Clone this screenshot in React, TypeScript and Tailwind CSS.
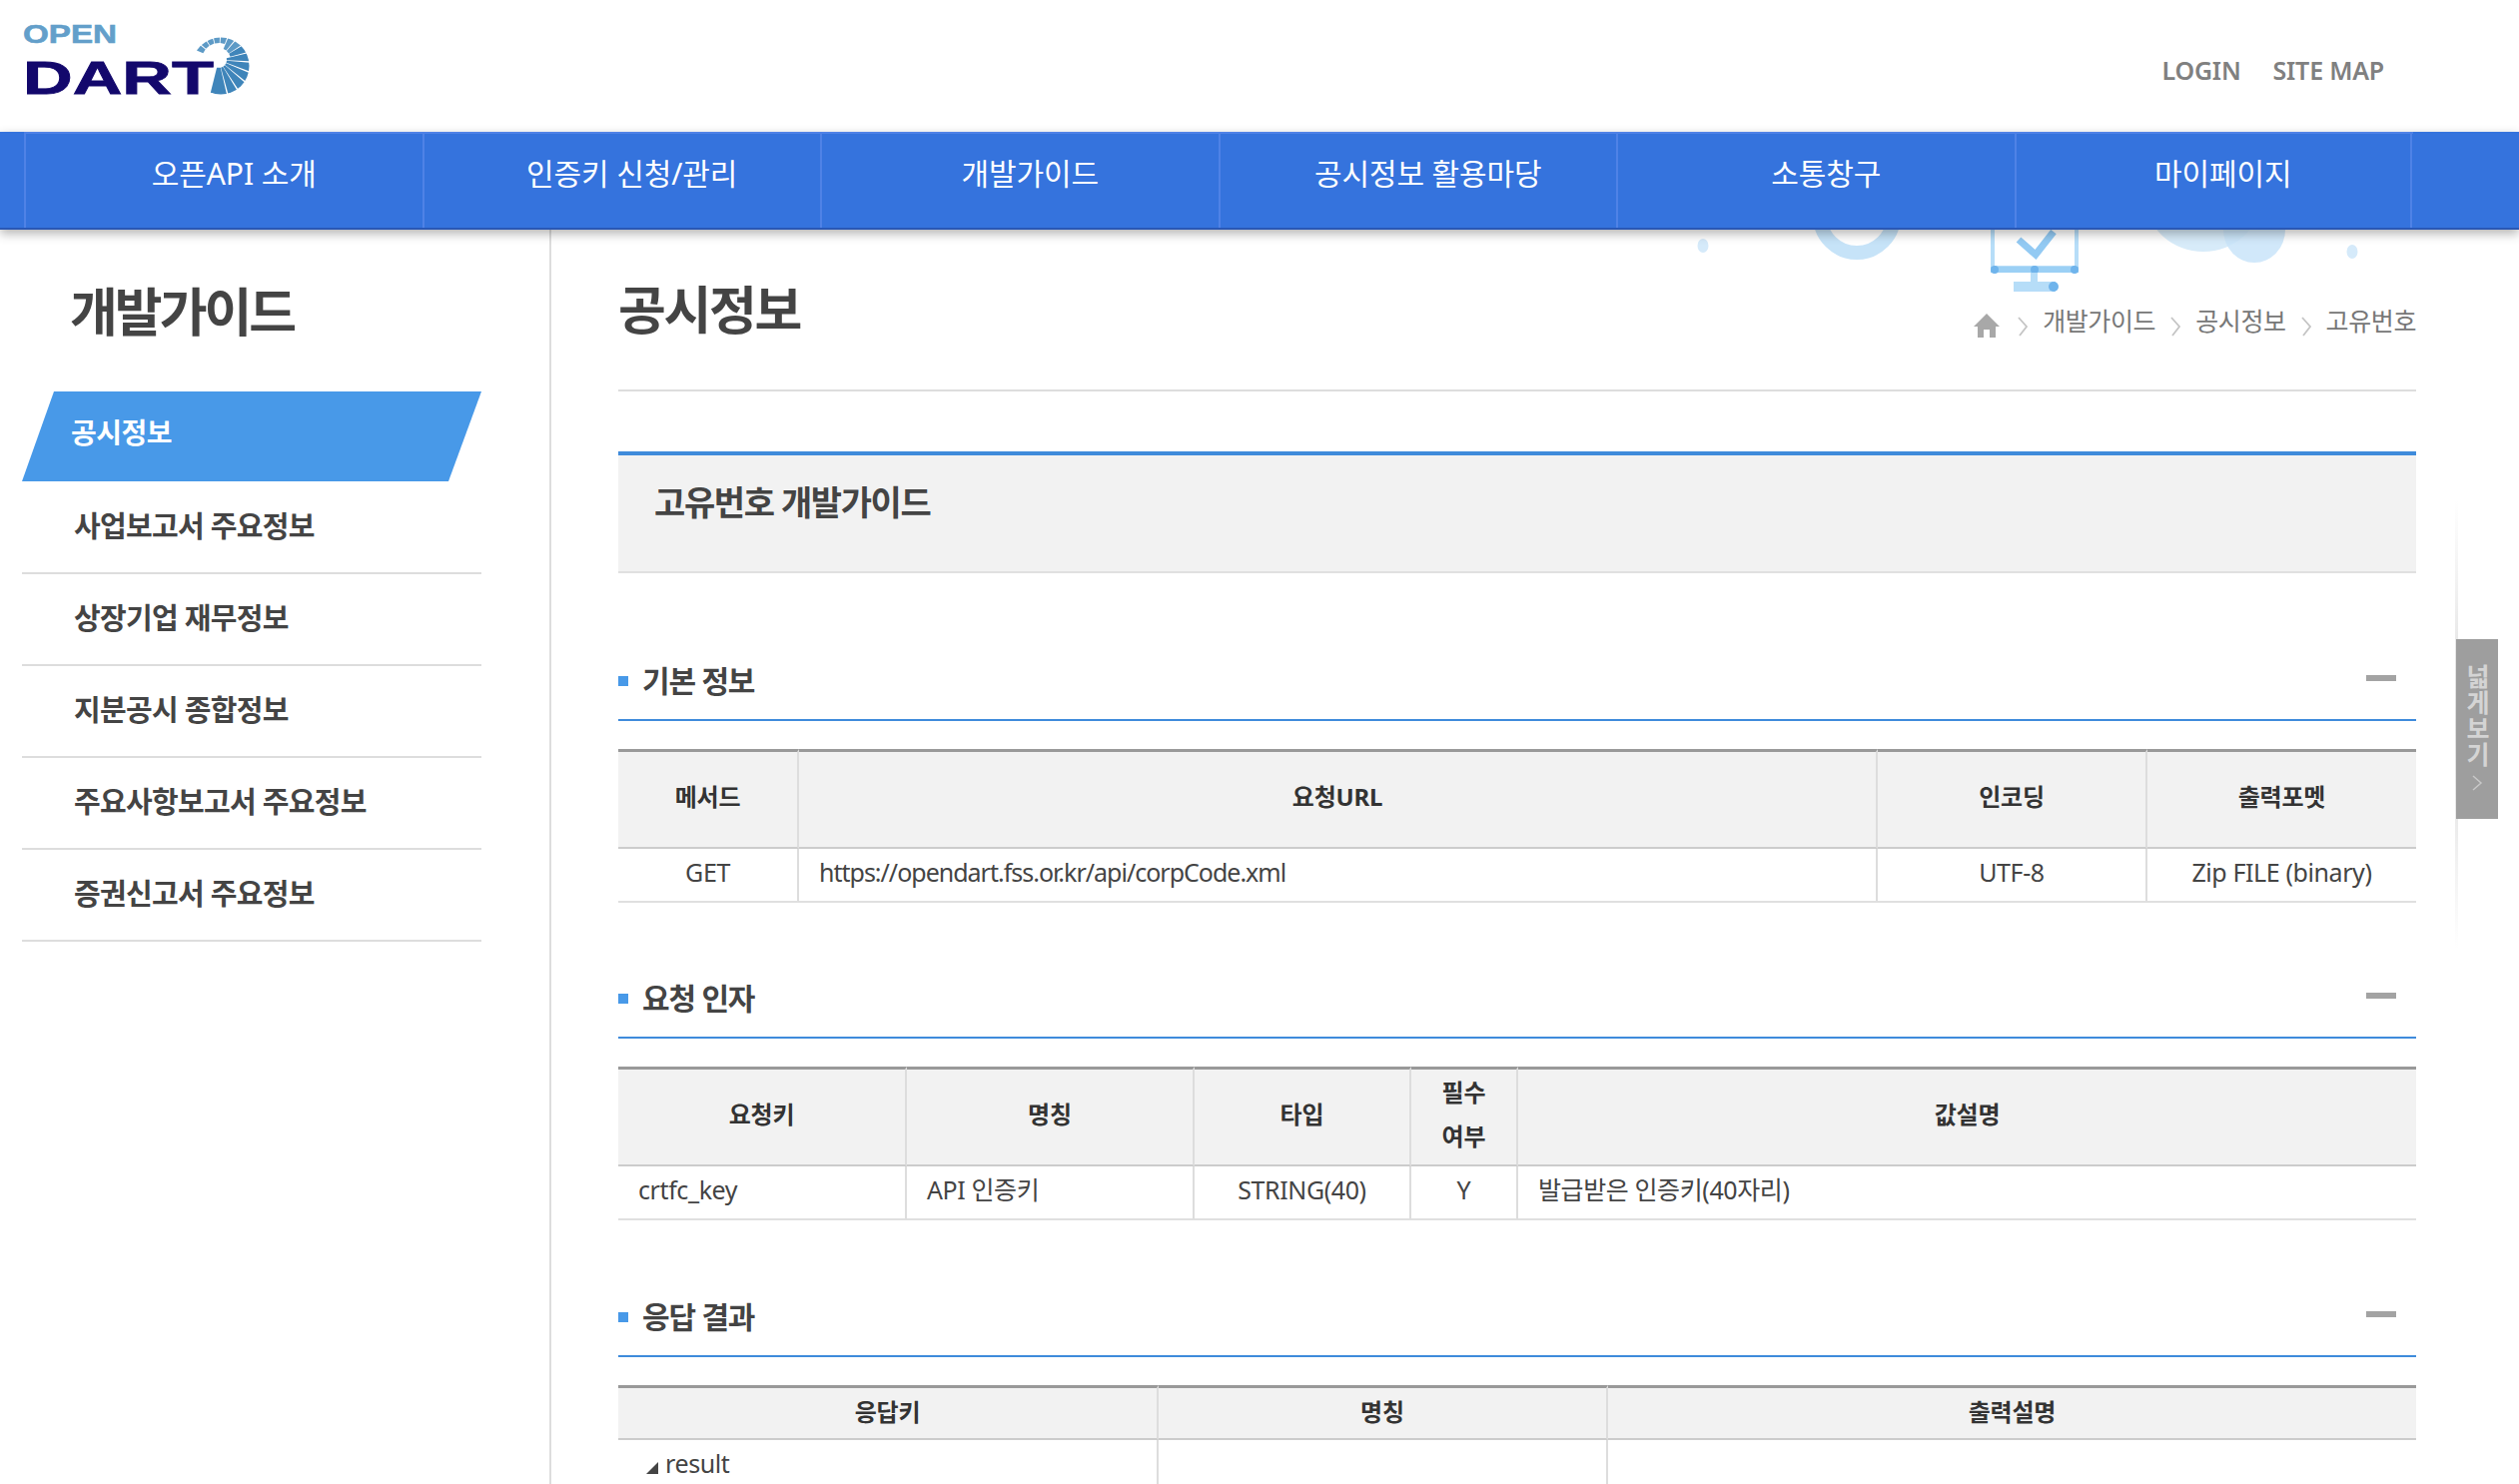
import { ReactNode } from "react";

const NAV_ITEMS = [
  "오픈API 소개",
  "인증키 신청/관리",
  "개발가이드",
  "공시정보 활용마당",
  "소통창구",
  "마이페이지",
];

const SIDE_ITEMS = [
  "사업보고서 주요정보",
  "상장기업 재무정보",
  "지분공시 종합정보",
  "주요사항보고서 주요정보",
  "증권신고서 주요정보",
];

function Logo() {
  const cx = 219;
  const cy = 60;
  // sun rays, degrees clockwise from the x axis
  const rays = [-158, -140, -122, -104, -86, -68, -50, -32, -14, 4, 22, 40, 58, 76];
  const point = (deg: number, r: number) => {
    const a = (deg * Math.PI) / 180;
    return `${cx + r * Math.cos(a)},${cy + r * Math.sin(a)}`;
  };
  return (
    <svg width="270" height="110" viewBox="0 0 270 110" className="block">
      <defs>
        <clipPath id="sun">
          <circle cx="221" cy="66" r="28.5" />
        </clipPath>
      </defs>
      <g clipPath="url(#sun)">
        {rays.map((deg, i) => {
          const next = i === rays.length - 1 ? 104 : deg + 16.5;
          const inner = i < 5 ? 17 : i < 8 ? 12 : 8;
          return (
            <polygon
              key={deg}
              points={`${point(deg + 1, inner)} ${point(deg + 1, 50)} ${point(next, 50)} ${point(next, inner)}`}
              fill={i > 6 ? "#3f85ba" : "#5d9ac6"}
            />
          );
        })}
      </g>
      <text
        x="23"
        y="43"
        fontFamily="'Liberation Sans', sans-serif"
        fontWeight="700"
        fontSize="26.5"
        fill="#639fca"
        stroke="#639fca"
        strokeWidth="0.6"
        textLength="94"
        lengthAdjust="spacingAndGlyphs"
      >
        OPEN
      </text>
      <text
        x="23"
        y="94"
        fontFamily="'Liberation Sans', sans-serif"
        fontWeight="700"
        fontSize="47"
        fill="#13086c"
        stroke="#13086c"
        strokeWidth="0.8"
        textLength="191"
        lengthAdjust="spacingAndGlyphs"
      >
        DART
      </text>
    </svg>
  );
}

function Decor() {
  return (
    <svg
      width="680"
      height="70"
      viewBox="0 0 680 70"
      className="absolute left-[1690px] top-[230px]"
    >
      <ellipse cx="15" cy="16" rx="5.5" ry="7" fill="#d5eafa" />
      <circle cx="169" cy="-14" r="37" fill="none" stroke="#c6e3f8" strokeWidth="14" />
      <rect x="305" y="-4" width="84" height="42" fill="none" stroke="#b6ddf8" strokeWidth="4" />
      <polyline points="331,10 348,25 366,2" fill="none" stroke="#93caf3" strokeWidth="7" />
      <rect x="303" y="37" width="88" height="6" fill="#9bd0f5" />
      <circle cx="307" cy="40" r="4" fill="#6fb4ec" />
      <circle cx="347" cy="40" r="4" fill="#6fb4ec" />
      <circle cx="387" cy="40" r="4" fill="#6fb4ec" />
      <rect x="343" y="43" width="7" height="9" fill="#b6ddf8" />
      <rect x="326" y="52" width="42" height="10" fill="#b6ddf8" />
      <circle cx="366" cy="57" r="5" fill="#6fb4ec" />
      <ellipse cx="516" cy="-30" rx="57" ry="52" fill="#d7ebf9" />
      <ellipse cx="567" cy="0" rx="31" ry="33" fill="#c9e4f9" fillOpacity="0.85" />
      <ellipse cx="665" cy="22" rx="5.5" ry="7" fill="#d5eafa" />
    </svg>
  );
}

function SectionHeading({ title }: { title: string }) {
  return (
    <div className="flex items-center justify-between h-[80px] border-b-2 border-[#3f8bdb] pr-[20px]">
      <div className="flex items-center">
        <span className="w-[10px] h-[10px] bg-[#4899e8] mr-[14px] mt-[2px]" />
        <h3 className="text-[30px] font-bold tracking-[-1.2px] text-[#444]">{title}</h3>
      </div>
      <span className="w-[30px] h-[6px] bg-[#a3a3a3] mb-[4px]" />
    </div>
  );
}

type Cell = { text: ReactNode; align?: "left" };

function DataTable({
  cols,
  head,
  rows,
  headHeight,
  headPad,
}: {
  cols: string[];
  head: ReactNode[];
  rows: Cell[][];
  headHeight: string;
  headPad: string;
}) {
  return (
    <table className="w-full table-fixed border-separate border-spacing-0 mt-[28px]">
      <colgroup>
        {cols.map((c, i) => (
          <col key={i} className={c} />
        ))}
      </colgroup>
      <thead>
        <tr className={headHeight}>
          {head.map((h, i) => (
            <th
              key={i}
              className={`bg-[#f2f2f2] border-t-[3px] border-t-[#999] border-b-2 border-b-[#ccc] border-r-2 border-r-[#ddd] last:border-r-0 text-[24px] leading-[44px] font-bold tracking-[-0.2px] text-[#333] text-center ${headPad}`}
            >
              {h}
            </th>
          ))}
        </tr>
      </thead>
      <tbody>
        {rows.map((row, r) => (
          <tr key={r} className="h-[54px]">
            {row.map((cell, i) => (
              <td
                key={i}
                className={`border-b-2 border-b-[#e0e0e0] border-r-2 border-r-[#ddd] last:border-r-0 px-[20px] pb-[5px] text-[25px] text-[#444] tracking-[-0.4px] ${
                  cell.align === "left" ? "text-left" : "text-center"
                }`}
              >
                {cell.text}
              </td>
            ))}
          </tr>
        ))}
      </tbody>
    </table>
  );
}

function Crumb() {
  return (
    <svg width="12" height="20" viewBox="0 0 12 20" className="mt-[11px]">
      <polyline points="2,1 10,10 3,19" fill="none" stroke="#c4c4c4" strokeWidth="1.8" />
    </svg>
  );
}

export default function App() {
  return (
    <div
      className="relative w-[2522px] h-[1486px] overflow-hidden bg-white"
      style={{ fontFamily: '"Noto Sans", "Noto Sans CJK KR", sans-serif' }}
    >
      {/* Top bar */}
      <header className="flex items-start justify-between h-[132px] pr-[135px]">
        <Logo />
        <div className="flex gap-[32px] pt-[52px] text-[25px] font-semibold text-[#808080] tracking-[-0.2px]">
          <a>LOGIN</a>
          <a>SITE MAP</a>
        </div>
      </header>

      <nav className="relative z-10 h-[98px] bg-[#3573dd] border-b-2 border-[#2a58b5] pl-[24px] shadow-[0_4px_10px_rgba(0,0,0,0.3)]">
        <ul className="flex w-[2392px] h-full border-t-2 border-[#4f82e6]">
          {NAV_ITEMS.map((item) => (
            <li
              key={item}
              className="flex items-center justify-center w-[398.5px] pl-[20px] pb-[16px] border-l-2 border-[#4f82e6] last:border-r-2 text-[30px] text-white tracking-[-0.1px]"
            >
              {item}
            </li>
          ))}
        </ul>
      </nav>

      <Decor />

      <div className="relative flex">
        {/* Sidebar */}
        <aside className="w-[552px] h-[1256px] border-r-2 border-[#ddd]">
          <h2 className="pl-[70px] pt-[56px] h-[162px] text-[52px] leading-[52px] font-bold tracking-[-3px] text-[#444]">
            개발가이드
          </h2>
          <div className="flex items-center ml-[22px] w-[460px] h-[90px] pl-[49px] pb-[8px] bg-[#4899e8] [clip-path:polygon(32px_0,100%_0,427px_100%,0_100%)] text-[28px] font-bold tracking-[-0.5px] text-white">
            공시정보
          </div>
          <ul className="ml-[22px] mt-[1px] w-[460px]">
            {SIDE_ITEMS.map((item) => (
              <li
                key={item}
                className="flex items-center h-[92px] pl-[52px] pb-[2px] border-b-2 border-[#ddd] text-[29px] font-bold tracking-[-0.7px] text-[#444]"
              >
                {item}
              </li>
            ))}
          </ul>
        </aside>

        {/* Content */}
        <main className="w-[1800px] ml-[67px]">
          <div className="flex justify-between h-[162px] border-b-2 border-[#ddd]">
            <h1 className="pt-[54px] text-[52px] leading-[52px] font-bold tracking-[-2.3px] text-[#444]">
              공시정보
            </h1>
            <div className="relative z-0 flex items-start gap-[14px] pt-[76px] text-[25px] leading-[30px] tracking-[-0.4px] text-[#777]">
              <svg width="26" height="24" viewBox="0 0 26 24" className="mt-[8px] mr-[3px]">
                <path d="M13 0 L26 13 L22 13 L22 24 L16 24 L16 16 L10 16 L10 24 L4 24 L4 13 L0 13 Z" fill="#a8a8a8" />
              </svg>
              <Crumb />
              <span>개발가이드</span>
              <Crumb />
              <span>공시정보</span>
              <Crumb />
              <span>고유번호</span>
            </div>
          </div>

          <div className="h-[122px] mt-[60px] bg-[#f2f2f2] border-t-4 border-t-[#3f8bdb] border-b-2 border-b-[#e0e0e0] pl-[36px] pt-[21px]">
            <h2 className="text-[34px] leading-[52px] font-bold tracking-[-1.4px] text-[#444]">
              고유번호 개발가이드
            </h2>
          </div>

          <section className="mt-[68px]">
            <SectionHeading title="기본 정보" />
            <DataTable
              cols={["w-[181px]", "w-[1080px]", "w-[270px]", "w-[269px]"]}
              head={["메서드", "요청URL", "인코딩", "출력포멧"]}
              headHeight="h-[100px]"
              headPad="pb-[5px]"
              rows={[
                [
                  { text: "GET" },
                  {
                    text: <span className="tracking-[-1px]">https://opendart.fss.or.kr/api/corpCode.xml</span>,
                    align: "left",
                  },
                  { text: "UTF-8" },
                  { text: "Zip FILE (binary)" },
                ],
              ]}
            />
          </section>

          <section className="mt-[56px]">
            <SectionHeading title="요청 인자" />
            <DataTable
              cols={["w-[289px]", "w-[288px]", "w-[217px]", "w-[107px]", "w-[899px]"]}
              head={[
                "요청키",
                "명칭",
                "타입",
                <>
                  필수
                  <br />
                  여부
                </>,
                "값설명",
              ]}
              headHeight="h-[100px]"
              headPad="pb-[5px]"
              rows={[
                [
                  { text: "crtfc_key", align: "left" },
                  { text: "API 인증키", align: "left" },
                  { text: "STRING(40)" },
                  { text: "Y" },
                  { text: "발급받은 인증키(40자리)", align: "left" },
                ],
              ]}
            />
          </section>

          <section className="mt-[57px]">
            <SectionHeading title="응답 결과" />
            <DataTable
              cols={["w-[541px]", "w-[450px]", "w-[809px]"]}
              head={["응답키", "명칭", "출력설명"]}
              headHeight="h-[55px]"
              headPad="pb-[3px]"
              rows={[
                [
                  {
                    text: (
                      <span className="flex items-center pl-[8px]">
                        <svg width="12" height="12" viewBox="0 0 12 12" className="mt-[8px] mr-[7px]">
                          <polygon points="12,0 12,12 0,12" fill="#444" />
                        </svg>
                        result
                      </span>
                    ),
                    align: "left",
                  },
                  { text: "" },
                  { text: "" },
                ],
              ]}
            />
          </section>
        </main>
      </div>

      {/* Wide view tab */}
      <div className="absolute left-[2458px] top-[500px] w-[3px] h-[450px] bg-linear-to-b from-transparent via-[#dcdcdc] to-transparent" />
      <div className="absolute left-[2459px] top-[640px] w-[42px] h-[180px] flex flex-col items-center pt-[25px] bg-[#9e9e9e]">
        <span className="[writing-mode:vertical-rl] text-[25px] leading-[42px] tracking-[1px] font-bold text-[#d4d4d4]">
          넓게보기
        </span>
        <svg width="12" height="18" viewBox="0 0 12 18" className="mt-[6px]">
          <polyline points="2,2 10,9 2,16" fill="none" stroke="#c8c8c8" strokeWidth="1.5" />
        </svg>
      </div>
    </div>
  );
}
